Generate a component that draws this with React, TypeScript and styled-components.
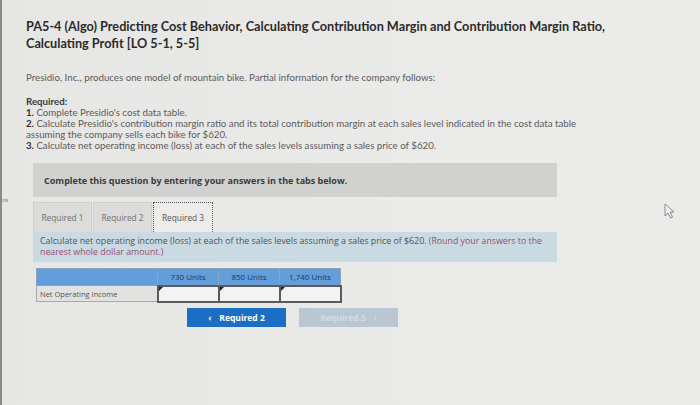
import React from "react";
import styled, { createGlobalStyle } from "styled-components";

const Global = createGlobalStyle`
  html, body { margin: 0; padding: 0; background: #e8e8e6; }
  body { font-family: "Lato", "Liberation Sans", sans-serif; }
`;

const Screen = styled.div`
  position: relative;
  width: 700px;
  height: 405px;
  overflow: hidden;
  box-sizing: border-box;
  border-left: 2px solid #8a8a88;
  background: linear-gradient(90deg, #e6e6e4 0%, #eaeae8 60%, #ebebe9 100%);
  padding: 18px 0 0 24px;
`;

const Title = styled.h1`
  margin: 0;
  font-family: "Lato", sans-serif;
  font-weight: 700;
  font-size: 12.7px;
  line-height: 17px;
  color: #2b2b2b;
  width: 620px;
`;

const Body = styled.div`
  font-family: "Lato", sans-serif;
  font-size: 9.7px;
  line-height: 11px;
  color: #5c5c5c;
`;

const Intro = styled.p`
  margin: 20px 0 0;
`;

const Required = styled.div`
  margin-top: 13px;
  width: 580px;
`;

const ReqHead = styled.div`
  color: #3a3a3a;
  font-weight: 700;
`;

const Item = styled.div`
  b { color: #333; font-weight: 700; }
`;

const Question = styled.div`
  margin: 12px 0 0 7px;
  width: 524px;
  font-family: "Open Sans", "DejaVu Sans", sans-serif;
`;

const Banner = styled.div`
  height: 34px;
  background: #d1d1cf;
  display: flex;
  align-items: center;
  padding-left: 11px;
  font-weight: 700;
  font-size: 9px;
  color: #3c3c3c;
`;

const Tabs = styled.div`
  margin-top: 5px;
  display: flex;
  align-items: flex-end;
  height: 30px;
`;

const Tab = styled.div<{ $active?: boolean; $w: number }>`
  width: ${(p) => p.$w}px;
  height: 30px;
  box-sizing: border-box;
  display: flex;
  align-items: center;
  justify-content: center;
  font-size: 8.3px;
  color: ${(p) => (p.$active ? "#555" : "#707070")};
  background: ${(p) => (p.$active ? "#ececea" : "#dcdcda")};
  border: ${(p) => (p.$active ? "1px dotted #555" : "1px solid #cfcfcd")};
  border-bottom: none;
  margin-right: 1px;
`;

const Info = styled.div`
  width: 524px;
  height: 30px;
  box-sizing: border-box;
  background: #c9dae3;
  padding: 4px 10px 0 7px;
  font-size: 8.8px;
  line-height: 11px;
  color: #4c565e;
`;

const Note = styled.span`
  color: #98506e;
`;

const Table = styled.table`
  margin: 6px 0 0 3px;
  border-collapse: collapse;
  font-size: 7.5px;
`;

const HeadCell = styled.th<{ $w: number }>`
  width: ${(p) => p.$w}px;
  height: 17px;
  box-sizing: border-box;
  padding: 0;
  background: #639edb;
  border: 1px solid #8aa4bf;
  color: #1d3660;
  font-size: 8px;
  font-weight: 400;
  text-align: center;
`;

const LabelCell = styled.td`
  height: 15px;
  padding: 0 0 0 3px;
  background: #e2e2e0;
  border: 1px solid #a9a9a7;
  color: #555;
`;

const InputCell = styled.td`
  position: relative;
  padding: 0;
  background: #f3f3f1;
  border: 2px solid #5a5a5a;
  &::before {
    content: "";
    position: absolute;
    left: 0;
    top: 0;
    border-left: 4px solid #222;
    border-bottom: 4px solid transparent;
  }
`;

const Nav = styled.div`
  margin: 5px 0 0 154px;
  display: flex;
  gap: 13px;
`;

const NavButton = styled.div<{ $disabled?: boolean }>`
  width: 99px;
  height: 19px;
  display: flex;
  align-items: center;
  justify-content: center;
  gap: 8px;
  font-size: 8.5px;
  font-weight: 700;
  background: ${(p) => (p.$disabled ? "#bac7d3" : "#1c6ec5")};
  color: ${(p) => (p.$disabled ? "#d3dce5" : "#ffffff")};
`;

const EdgeMark = styled.div`
  position: absolute;
  left: 0;
  top: 197px;
  font-size: 6px;
  color: #777;
  font-family: "Liberation Sans", sans-serif;
`;

const Cursor = styled.svg`
  position: absolute;
  left: 662px;
  top: 203px;
`;

export default function App() {
  return (
    <>
      <Global />
      <Screen>
        <Title>
          PA5-4 (Algo) Predicting Cost Behavior, Calculating Contribution Margin and Contribution Margin Ratio,
          <br />
          Calculating Profit [LO 5-1, 5-5]
        </Title>
        <Body>
          <Intro>Presidio, Inc., produces one model of mountain bike. Partial information for the company follows:</Intro>
          <Required>
            <ReqHead>Required:</ReqHead>
            <Item><b>1.</b> Complete Presidio's cost data table.</Item>
            <Item>
              <b>2.</b> Calculate Presidio's contribution margin ratio and its total contribution margin at each sales level indicated in the cost data table
              <br />
              assuming the company sells each bike for $620.
            </Item>
            <Item><b>3.</b> Calculate net operating income (loss) at each of the sales levels assuming a sales price of $620.</Item>
          </Required>
        </Body>
        <Question>
          <Banner>Complete this question by entering your answers in the tabs below.</Banner>
          <Tabs>
            <Tab $w={59}>Required 1</Tab>
            <Tab $w={59}>Required 2</Tab>
            <Tab $w={60} $active>Required 3</Tab>
          </Tabs>
          <Info>
            Calculate net operating income (loss) at each of the sales levels assuming a sales price of $620.{" "}
            <Note>(Round your answers to the</Note>
            <br />
            <Note>nearest whole dollar amount.)</Note>
          </Info>
          <Table>
            <thead>
              <tr>
                <HeadCell $w={121}></HeadCell>
                <HeadCell $w={61}>730 Units</HeadCell>
                <HeadCell $w={61}>850 Units</HeadCell>
                <HeadCell $w={61}>1,740 Units</HeadCell>
              </tr>
            </thead>
            <tbody>
              <tr>
                <LabelCell>Net Operating Income</LabelCell>
                <InputCell />
                <InputCell />
                <InputCell />
              </tr>
            </tbody>
          </Table>
          <Nav>
            <NavButton>
              <span>&lsaquo;</span>
              <span>Required 2</span>
            </NavButton>
            <NavButton $disabled>
              <span>Required 3</span>
              <span>&rsaquo;</span>
            </NavButton>
          </Nav>
        </Question>
        <EdgeMark>ns</EdgeMark>
        <Cursor width="11" height="16" viewBox="0 0 11 16">
          <path d="M1 1 L1 13 L4 10 L6.5 15 L8.5 14 L6 9 L10 9 Z" fill="#f4f4f4" stroke="#8a8a8a" strokeWidth="1" strokeLinejoin="round" />
        </Cursor>
      </Screen>
    </>
  );
}
